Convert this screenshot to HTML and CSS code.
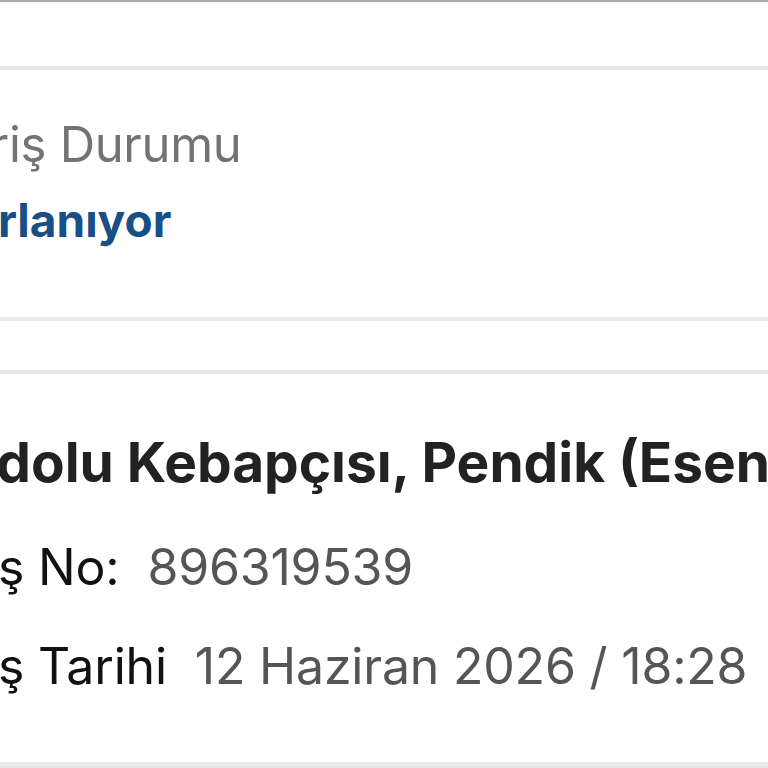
FILE: index.html
```html
<!DOCTYPE html>
<html lang="tr">
<head>
    <meta charset="UTF-8">
    <meta name="viewport" content="width=device-width, initial-scale=1.0">
    <title>Sipariş Detayı</title>
    <link rel="stylesheet" href="styles.css">
</head>
<body>
    <div class="screen">
        <div class="navbar"></div>

        <section class="card status-card">
            <div class="status-label">Sipariş Durumu</div>
            <div class="status-value">Hazırlanıyor</div>
        </section>

        <div class="gap"></div>

        <section class="card order-card">
            <h2 class="restaurant">Anadolu Kebapçısı, Pendik (Esenyalı Mah.)</h2>
            <div class="row">
                <span class="row-label">Sipariş No:</span>
                <span class="row-value">896319539</span>
            </div>
            <div class="row">
                <span class="row-label">Sipariş Tarihi</span>
                <span class="row-value">12 Haziran 2026 / 18:28</span>
            </div>
        </section>
    </div>
</body>
</html>
```

FILE: styles.css
```css
body {
    margin: 0;
    padding: 0;
    background-color: #fff;
    font-family: Inter, "Noto Sans", sans-serif;
    overflow: hidden;
}
.screen {
    width: 768px;
    height: 768px;
    overflow: hidden;
    background-color: #fefefe;
}
.navbar {
    height: 64px;
    border-top: 2px solid #a9a9a9;
    background-color: #fff;
}
.card {
    background-color: #fff;
    border-top: 4px solid #e9e9e9;
    border-bottom: 4px solid #e9e9e9;
    white-space: nowrap;
}
.status-card {
    padding-top: 46px;
    height: 201px;
}
.status-label {
    font-size: 49px;
    line-height: 58px;
    letter-spacing: -0.3px;
    color: #737373;
    margin-left: -110px;
}
.status-value {
    font-size: 46px;
    line-height: 55px;
    font-weight: 700;
    color: #184f86;
    margin-top: 19px;
    margin-left: -102px;
}
.gap {
    height: 49px;
}
.order-card {
    padding-top: 56px;
    height: 332px;
    border-bottom-width: 6px;
}
.restaurant {
    margin: 0 0 43px -111px;
    font-size: 55px;
    line-height: 64px;
    font-weight: 700;
    color: #222;
}
.row {
    display: flex;
    gap: 28px;
    font-size: 50px;
    line-height: 60px;
    letter-spacing: -0.2px;
    margin-left: -136px;
    margin-bottom: 39px;
}
.row-label {
    color: #111;
}
.row-value {
    color: #555;
}
```
